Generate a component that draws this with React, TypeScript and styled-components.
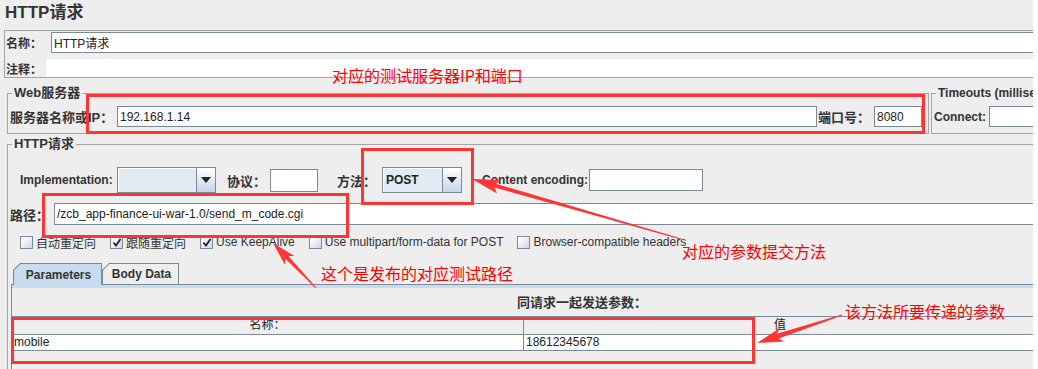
import React from "react";
import styled, { createGlobalStyle } from "styled-components";

const UI_FONT = `"Liberation Sans", Arial, "Noto Sans CJK SC", sans-serif`;
const LINE = "#7a8a99";
const MARK = "#ff3535";

const GlobalStyle = createGlobalStyle`
  html, body {
    margin: 0;
    padding: 0;
    background: #ffffff;
  }
  * {
    box-sizing: border-box;
  }
`;

const Screen = styled.div`
  position: relative;
  width: 1033px;
  height: 369px;
  overflow: hidden;
  background: #eeeeee;
  font-family: ${UI_FONT};
  font-size: 12px;
  color: #333333;
`;

const Page = styled.div`
  width: 1100px;
`;

const Title = styled.div`
  height: 30px;
  padding: 3px 0 0 5px;
  font-size: 17px;
  line-height: 20px;
  font-weight: bold;
  color: #333333;
`;

const NamePanel = styled.div`
  margin-left: 4px;
  padding: 1px 0 0 1px;
  border: 1px solid #a3a3a3;
  border-right: none;
`;

const FormRow = styled.div<{ $h: number; $mt?: number; $pl?: number }>`
  display: flex;
  align-items: center;
  height: ${p => p.$h}px;
  margin-top: ${p => p.$mt ?? 0}px;
  padding-left: ${p => p.$pl ?? 0}px;
`;

const Label = styled.div<{ $w: number; $ml?: number; $size?: number }>`
  flex: none;
  width: ${p => p.$w}px;
  margin-left: ${p => p.$ml ?? 0}px;
  font-size: ${p => p.$size ?? 13}px;
  font-weight: bold;
  white-space: nowrap;
  color: #333333;
`;

const TextField = styled.div<{ $w?: number; $h?: number }>`
  ${p => (p.$w ? `flex: none; width: ${p.$w}px;` : `flex: 1; min-width: 0;`)}
  height: ${p => p.$h ?? 21}px;
  display: flex;
  align-items: center;
  padding: 0 2px;
  border: 1px solid ${LINE};
  background: #ffffff;
  font-size: 12px;
  color: #222222;
  white-space: nowrap;
  overflow: hidden;
`;

const RemarkArea = styled.div`
  flex: 1;
  height: 100%;
  background: #ffffff;
`;

const ServerRow = styled.div`
  display: flex;
  gap: 2px;
  margin-top: 8px;
  padding-left: 7px;
`;

const Group = styled.fieldset<{ $w?: number }>`
  ${p => (p.$w ? `flex: none; width: ${p.$w}px;` : ``)}
  min-width: 0;
  margin: 0;
  padding: 6px 6px 6px 2px;
  border: 1px solid #a5a5a5;
`;

const RequestGroup = styled(Group)`
  margin: 3px 0 0 7px;
  padding-top: 6px;
  height: 300px;
`;

const Legend = styled.legend<{ $size?: number }>`
  margin-left: 2px;
  padding: 0 2px;
  font-size: ${p => p.$size ?? 13}px;
  line-height: 14px;
  font-weight: bold;
  white-space: nowrap;
  color: #333333;
`;

const Combo = styled.div<{ $w: number }>`
  flex: none;
  display: flex;
  width: ${p => p.$w}px;
  height: 26px;
  border: 1px solid ${LINE};
`;

const ComboValue = styled.div`
  flex: 1;
  display: flex;
  align-items: center;
  padding-left: 3px;
  background: #e2eaf3;
  box-shadow: inset 1px 1px 0 #ffffff;
  font-weight: bold;
  color: #222222;
`;

const ComboButton = styled.div`
  flex: none;
  width: 19px;
  display: flex;
  align-items: center;
  justify-content: center;
  border-left: 1px solid ${LINE};
  background: linear-gradient(#ffffff, #c6d5e7);
`;

const DownArrow = styled.span`
  width: 0;
  height: 0;
  border-left: 5px solid transparent;
  border-right: 5px solid transparent;
  border-top: 6px solid #222222;
`;

const CheckRow = styled.div`
  display: flex;
  align-items: center;
  gap: 14px;
  height: 20px;
  margin-top: 7px;
  padding-left: 10px;
`;

const CheckItem = styled.label`
  display: flex;
  align-items: center;
  gap: 3px;
  font-size: 12px;
  white-space: nowrap;
  color: #333333;
`;

const CheckBox = styled.span`
  flex: none;
  width: 13px;
  height: 13px;
  display: flex;
  align-items: center;
  justify-content: center;
  border: 1px solid ${LINE};
  background: linear-gradient(135deg, #ffffff 10%, #cbd9e9);
`;

const TabArea = styled.div`
  margin: 11px 0 0 1px;
`;

const TabStrip = styled.div`
  display: flex;
  padding-left: 2px;
  margin-bottom: -1px;
`;

const TabEdge = styled.div<{ $active?: boolean; $w: number }>`
  position: relative;
  z-index: ${p => (p.$active ? 1 : 0)};
  width: ${p => p.$w}px;
  height: 22px;
  padding: 1px 1px ${p => (p.$active ? 0 : 1)}px 1px;
  background: ${LINE};
  clip-path: polygon(7px 0, 100% 0, 100% 100%, 0 100%, 0 7px);
`;

const TabFace = styled.div<{ $active?: boolean }>`
  height: 100%;
  display: flex;
  align-items: center;
  justify-content: center;
  padding-left: 2px;
  background: ${p => (p.$active ? "#c8dcf0" : "#eeeeee")};
  clip-path: polygon(6.4px 0, 100% 0, 100% 100%, 0 100%, 0 6.4px);
  font-size: 12px;
  font-weight: bold;
  color: #333333;
`;

const TabBody = styled.div`
  height: 120px;
  border-top: 1px solid ${LINE};
  border-left: 1px solid ${LINE};
  box-shadow: inset 0 3px 0 #c8dcf0;
`;

const Caption = styled.div`
  width: 1140px;
  height: 31px;
  padding-top: 5px;
  line-height: 26px;
  text-align: center;
  font-size: 13px;
  font-weight: bold;
  color: #333333;
`;

const ParamTable = styled.div`
  display: grid;
  grid-template-columns: 512px 512px;
  border-top: 1px solid ${LINE};
  border-bottom: 1px solid ${LINE};
`;

const HeadCell = styled.div<{ $first?: boolean }>`
  height: 18px;
  line-height: 17px;
  text-align: center;
  font-size: 12px;
  color: #222222;
  border-bottom: 1px solid ${LINE};
  border-right: ${p => (p.$first ? `1px solid ${LINE}` : "none")};
`;

const BodyCell = styled.div<{ $first?: boolean }>`
  height: 15px;
  line-height: 15px;
  padding-left: 2px;
  background: #ffffff;
  font-size: 12px;
  color: #222222;
  border-right: ${p => (p.$first ? `1px solid ${LINE}` : "none")};
`;

/* red annotations drawn over the screenshot */
const MarkBox = styled.div<{ $x: number; $y: number; $w: number; $h: number }>`
  position: absolute;
  left: ${p => p.$x}px;
  top: ${p => p.$y}px;
  width: ${p => p.$w}px;
  height: ${p => p.$h}px;
  border: 3px solid ${MARK};
  pointer-events: none;
`;

const Note = styled.div<{ $x: number; $y: number }>`
  position: absolute;
  left: ${p => p.$x}px;
  top: ${p => p.$y}px;
  font-family: "Noto Sans CJK SC", sans-serif;
  font-size: 16px;
  line-height: 18px;
  color: #ff0000;
  white-space: nowrap;
  pointer-events: none;
`;

const ArrowLayer = styled.svg`
  position: absolute;
  left: 0;
  top: 0;
  pointer-events: none;
`;

type Pt = [number, number];

function arrowPoints(tail: Pt, tip: Pt, headLen: number, headW: number, shaft: number) {
  const dx = tip[0] - tail[0];
  const dy = tip[1] - tail[1];
  const len = Math.hypot(dx, dy);
  const ux = dx / len;
  const uy = dy / len;
  const nx = -uy;
  const ny = ux;
  const bx = tip[0] - ux * headLen;
  const by = tip[1] - uy * headLen;
  const sweep = 4;
  const pts: Pt[] = [
    [tail[0] + nx * 0.5, tail[1] + ny * 0.5],
    [bx + nx * shaft / 2, by + ny * shaft / 2],
    [bx - ux * sweep + nx * headW / 2, by - uy * sweep + ny * headW / 2],
    tip,
    [bx - ux * sweep - nx * headW / 2, by - uy * sweep - ny * headW / 2],
    [bx - nx * shaft / 2, by - ny * shaft / 2],
    [tail[0] - nx * 0.5, tail[1] - ny * 0.5],
  ];
  return pts.map(p => `${p[0].toFixed(1)},${p[1].toFixed(1)}`).join(" ");
}

const arrows = [
  { tail: [681, 239] as Pt, tip: [472, 179] as Pt, head: 24, width: 14, shaft: 4 },
  { tail: [316, 288] as Pt, tip: [273, 243] as Pt, head: 20, width: 13, shaft: 4 },
  { tail: [842, 315] as Pt, tip: [757, 343] as Pt, head: 22, width: 14, shaft: 5 },
];

function Check() {
  return (
    <svg width="10" height="9" viewBox="0 0 10 9">
      <path d="M1.5 4.5 L4 7.5 L8.5 1" fill="none" stroke="#222" strokeWidth="1.8" />
    </svg>
  );
}

const options = [
  { label: "自动重定向", checked: false },
  { label: "跟随重定向", checked: true },
  { label: "Use KeepAlive", checked: true },
  { label: "Use multipart/form-data for POST", checked: false },
  { label: "Browser-compatible headers", checked: false },
];

export default function App() {
  return (
    <>
      <GlobalStyle />
      <Screen>
        <Page>
          <Title>HTTP请求</Title>

          <NamePanel>
            <FormRow $h={21}>
              <Label $w={45} $size={12}>名称：</Label>
              <TextField>HTTP请求</TextField>
            </FormRow>
            <FormRow $h={18} $mt={6}>
              <Label $w={40} $size={12}>注释：</Label>
              <RemarkArea />
            </FormRow>
          </NamePanel>

          <ServerRow>
            <Group $w={922}>
              <Legend>Web服务器</Legend>
              <FormRow $h={21}>
                <Label $w={107}>服务器名称或IP：</Label>
                <TextField>192.168.1.14</TextField>
                <Label $w={56} $ml={1}>端口号：</Label>
                <TextField $w={48}>8080</TextField>
              </FormRow>
            </Group>
            <Group $w={260}>
              <Legend $size={12}>Timeouts (milliseconds)</Legend>
              <FormRow $h={21}>
                <Label $w={55} $size={12}>Connect:</Label>
                <TextField $w={120} />
              </FormRow>
            </Group>
          </ServerRow>

          <RequestGroup>
            <Legend>HTTP请求</Legend>
            <FormRow $h={26} $mt={10} $pl={10}>
              <Label $w={97} $size={12}>Implementation:</Label>
              <Combo $w={99}>
                <ComboValue />
                <ComboButton><DownArrow /></ComboButton>
              </Combo>
              <Label $w={43} $ml={11}>协议：</Label>
              <TextField $w={48} $h={23} />
              <Label $w={45} $ml={19}>方法：</Label>
              <Combo $w={80}>
                <ComboValue>POST</ComboValue>
                <ComboButton><DownArrow /></ComboButton>
              </Combo>
              <Label $w={107} $ml={20} $size={12}>Content encoding:</Label>
              <TextField $w={114} $h={22} />
            </FormRow>

            <FormRow $h={22} $mt={10}>
              <Label $w={44}>路径：</Label>
              <TextField $h={22}>/zcb_app-finance-ui-war-1.0/send_m_code.cgi</TextField>
            </FormRow>

            <CheckRow>
              {options.map(o => (
                <CheckItem key={o.label}>
                  <CheckBox>{o.checked && <Check />}</CheckBox>
                  {o.label}
                </CheckItem>
              ))}
            </CheckRow>

            <TabArea>
              <TabStrip>
                <TabEdge $active $w={89}>
                  <TabFace $active>Parameters</TabFace>
                </TabEdge>
                <TabEdge $w={77}>
                  <TabFace>Body Data</TabFace>
                </TabEdge>
              </TabStrip>
              <TabBody>
                <Caption>同请求一起发送参数：</Caption>
                <ParamTable>
                  <HeadCell $first>名称：</HeadCell>
                  <HeadCell>值</HeadCell>
                  <BodyCell $first>mobile</BodyCell>
                  <BodyCell>18612345678</BodyCell>
                </ParamTable>
              </TabBody>
            </TabArea>
          </RequestGroup>
        </Page>

        <MarkBox $x={86} $y={94} $w={839} $h={40} />
        <MarkBox $x={361} $y={148} $w={113} $h={57} />
        <MarkBox $x={42} $y={193} $w={307} $h={45} />
        <MarkBox $x={11} $y={317} $w={744} $h={47} />

        <Note $x={332} $y={66}>对应的测试服务器IP和端口</Note>
        <Note $x={682} $y={242}>对应的参数提交方法</Note>
        <Note $x={321} $y={264}>这个是发布的对应测试路径</Note>
        <Note $x={845} $y={302}>该方法所要传递的参数</Note>

        <ArrowLayer width={1033} height={369}>
          {arrows.map((a, i) => (
            <polygon key={i} points={arrowPoints(a.tail, a.tip, a.head, a.width, a.shaft)} fill={MARK} />
          ))}
        </ArrowLayer>
      </Screen>
    </>
  );
}
